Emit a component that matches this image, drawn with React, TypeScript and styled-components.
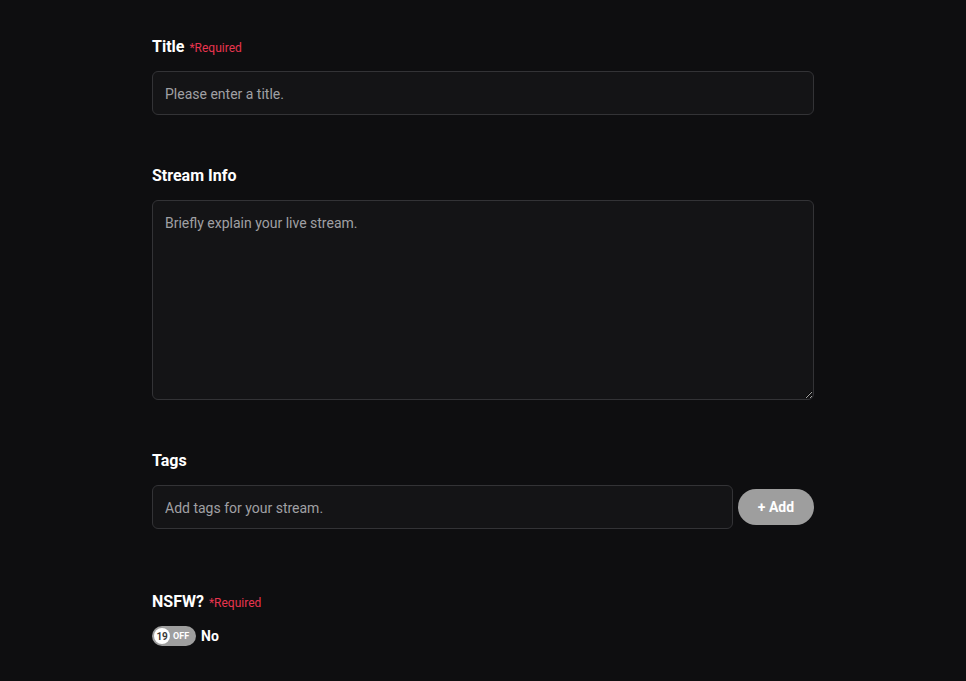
import React from 'react';
import styled, { createGlobalStyle } from 'styled-components';

const GlobalStyle = createGlobalStyle`
  html, body {
    margin: 0;
    padding: 0;
    background-color: #0e0e10;
  }
  body {
    font-family: Roboto, "Liberation Sans", sans-serif;
    color: #ffffff;
  }
`;

const Page = styled.div`
  min-height: 681px;
  background-color: #0e0e10;
  display: flex;
  justify-content: center;
`;

const Form = styled.form`
  width: 662px;
  padding-top: 37px;
  display: flex;
  flex-direction: column;
`;

const Section = styled.div<{ $gap: number }>`
  display: flex;
  flex-direction: column;
  margin-bottom: ${(p) => p.$gap}px;
`;

const LabelRow = styled.div`
  display: flex;
  align-items: baseline;
  gap: 5px;
  height: 20px;
  line-height: 20px;
  margin-bottom: 14px;
`;

const Label = styled.label`
  font-size: 16px;
  font-weight: 700;
  color: #ffffff;
`;

const Required = styled.span`
  font-size: 12px;
  color: #e8354f;
`;

const fieldBase = `
  box-sizing: border-box;
  background-color: #141416;
  border: 1px solid #333336;
  border-radius: 6px;
  color: #ffffff;
  font-family: Roboto, "Liberation Sans", sans-serif;
  font-size: 14px;
  outline: none;
  &::placeholder {
    color: #a0a0a4;
  }
`;

const Input = styled.input`
  ${fieldBase}
  height: 44px;
  padding: 2px 12px 0;
  width: 100%;
`;

const TextArea = styled.textarea`
  ${fieldBase}
  height: 200px;
  width: 100%;
  padding: 14px 12px;
  line-height: 16px;
  resize: vertical;
`;

const TagRow = styled.div`
  display: flex;
  align-items: center;
  gap: 5px;
`;

const TagInput = styled(Input)`
  flex: 1;
  width: auto;
`;

const AddButton = styled.button`
  width: 76px;
  height: 36px;
  border: none;
  border-radius: 18px;
  background-color: #9e9e9e;
  color: #ffffff;
  font-family: Roboto, "Liberation Sans", sans-serif;
  font-size: 14px;
  font-weight: 700;
  cursor: pointer;
`;

const ToggleRow = styled.div`
  display: flex;
  align-items: center;
  gap: 5px;
`;

const Toggle = styled.div`
  box-sizing: border-box;
  width: 44px;
  height: 20px;
  border-radius: 10px;
  background-color: #9e9e9e;
  display: flex;
  align-items: center;
  padding: 0 2px;
  gap: 3px;
`;

const Knob = styled.span`
  width: 16px;
  height: 16px;
  border-radius: 50%;
  background-color: #ffffff;
  color: #3a3a3a;
  font-size: 10px;
  font-weight: 700;
  display: flex;
  align-items: center;
  justify-content: center;
  letter-spacing: -0.3px;
`;

const ToggleText = styled.span`
  font-size: 9px;
  font-weight: 700;
  color: #ffffff;
`;

const ToggleLabel = styled.span`
  font-size: 14px;
  font-weight: 700;
  color: #ffffff;
`;

export default function App() {
  return (
    <>
      <GlobalStyle />
      <Page>
        <Form onSubmit={(e) => e.preventDefault()}>
          <Section $gap={51}>
            <LabelRow>
              <Label>Title</Label>
              <Required>*Required</Required>
            </LabelRow>
            <Input placeholder="Please enter a title." />
          </Section>
          <Section $gap={51}>
            <LabelRow>
              <Label>Stream Info</Label>
            </LabelRow>
            <TextArea placeholder="Briefly explain your live stream." />
          </Section>
          <Section $gap={63}>
            <LabelRow>
              <Label>Tags</Label>
            </LabelRow>
            <TagRow>
              <TagInput placeholder="Add tags for your stream." />
              <AddButton type="button">+ Add</AddButton>
            </TagRow>
          </Section>
          <Section $gap={0}>
            <LabelRow>
              <Label>NSFW?</Label>
              <Required>*Required</Required>
            </LabelRow>
            <ToggleRow>
              <Toggle>
                <Knob>19</Knob>
                <ToggleText>OFF</ToggleText>
              </Toggle>
              <ToggleLabel>No</ToggleLabel>
            </ToggleRow>
          </Section>
        </Form>
      </Page>
    </>
  );
}
